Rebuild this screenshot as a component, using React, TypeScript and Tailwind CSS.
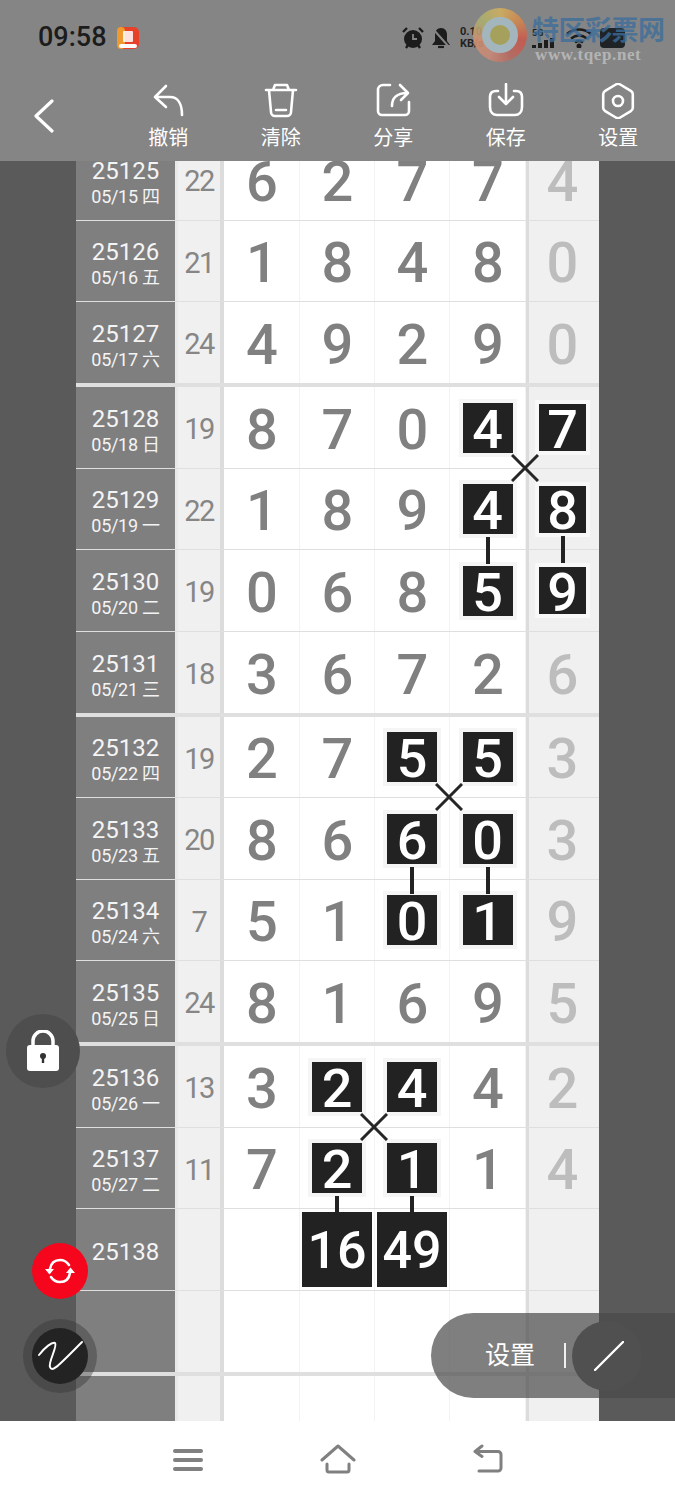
import React from "react";

type DrawRow = {
  id?: string;
  date?: string;
  sum?: number;
  cells: (number | string | null)[];
  marked?: number[];
  linked?: number[];
  crossAt?: number;
  shortLink?: boolean;
  thick?: boolean;
};

const rows: DrawRow[] = [
  { id: "25125", date: "05/15 四", sum: 22, cells: [6, 2, 7, 7, 4] },
  { id: "25126", date: "05/16 五", sum: 21, cells: [1, 8, 4, 8, 0] },
  { id: "25127", date: "05/17 六", sum: 24, cells: [4, 9, 2, 9, 0], thick: true },
  { id: "25128", date: "05/18 日", sum: 19, cells: [8, 7, 0, 4, 7], marked: [3, 4], crossAt: 3 },
  { id: "25129", date: "05/19 一", sum: 22, cells: [1, 8, 9, 4, 8], marked: [3, 4], linked: [3, 4] },
  { id: "25130", date: "05/20 二", sum: 19, cells: [0, 6, 8, 5, 9], marked: [3, 4] },
  { id: "25131", date: "05/21 三", sum: 18, cells: [3, 6, 7, 2, 6], thick: true },
  { id: "25132", date: "05/22 四", sum: 19, cells: [2, 7, 5, 5, 3], marked: [2, 3], crossAt: 2 },
  { id: "25133", date: "05/23 五", sum: 20, cells: [8, 6, 6, 0, 3], marked: [2, 3], linked: [2, 3] },
  { id: "25134", date: "05/24 六", sum: 7, cells: [5, 1, 0, 1, 9], marked: [2, 3] },
  { id: "25135", date: "05/25 日", sum: 24, cells: [8, 1, 6, 9, 5], thick: true },
  { id: "25136", date: "05/26 一", sum: 13, cells: [3, 2, 4, 4, 2], marked: [1, 2], crossAt: 1 },
  { id: "25137", date: "05/27 二", sum: 11, cells: [7, 2, 1, 1, 4], marked: [1, 2], linked: [1, 2], shortLink: true },
  { id: "25138", cells: [null, "16", "49", null, null] },
  { cells: [null, null, null, null, null], thick: true },
  { cells: [null, null, null, null, null] },
];

const cellWidths = ["w-[76px]", "w-[75px]", "w-[75px]", "w-[76px]"];

const MarkedDigit = ({
  value,
  small,
  link,
  shortLink,
}: {
  value: number;
  small?: boolean;
  link?: boolean;
  shortLink?: boolean;
}) => (
  <div
    className={`relative mt-[1px] flex items-center justify-center bg-[#222222] border-[4px] box-content text-white font-medium text-[54px] leading-none ${
      small ? "w-[47px] h-[47px] border-[#f8f8f8]" : "w-[50px] h-[50px] border-[#f5f5f5]"
    }`}
  >
    <span className="pt-[4px]">{value}</span>
    {link && (
      <div
        className={`absolute left-1/2 -translate-x-1/2 top-full mt-[3px] w-[4px] bg-[#222222] z-10 ${
          shortLink ? "h-[17px]" : "h-[27px]"
        }`}
      />
    )}
  </div>
);

const Cross = () => (
  <svg
    className="absolute right-[-14px] bottom-[-14px] z-20"
    width="28"
    height="28"
    viewBox="0 0 28 28"
    fill="none"
    stroke="#262626"
    strokeWidth="3"
  >
    <path d="M1 1 27 27M27 1 1 27" />
  </svg>
);

const Row = ({ row }: { row: DrawRow }) => {
  const digit = (i: number, extra: string) => {
    const value = row.cells[i];
    const isMarked = row.marked?.includes(i);
    const isLinked = row.linked?.includes(i);
    if (typeof value === "string") {
      return (
        <div className="relative z-10 w-[70px] h-[75px] flex items-center justify-center pt-[3px] bg-[#222222] text-white text-[52px] font-medium leading-none">
          {value}
        </div>
      );
    }
    if (value === null) return null;
    if (isMarked) {
      return (
        <MarkedDigit
          value={value}
          small={i === 4}
          link={isLinked}
          shortLink={row.shortLink}
        />
      );
    }
    return <span className={extra}>{value}</span>;
  };

  return (
    <div
      className={`flex w-[523px] shrink-0 border-[#dfdfdf] ${
        row.thick ? "h-[85px] border-b-[4px]" : "h-[81.5px] border-b"
      }`}
    >
      <div className="w-[99px] flex flex-col items-center justify-center pt-[5px] bg-[#7f7f7f] text-[#f4f4f4]">
        {row.id && <div className="text-[24px] leading-[30px]">{row.id}</div>}
        {row.date && (
          <div className="text-[18px] leading-[22px] tracking-[-0.3px] whitespace-nowrap">{row.date}</div>
        )}
      </div>
      <div className="w-[3px] bg-[#e9e9e9]" />
      <div className="w-[42px] flex items-center justify-center pt-[5px] bg-[#f0f0f0] text-[#868686] text-[29px] tracking-[-1.5px]">
        {row.sum}
      </div>
      <div className="w-[4px] bg-[#dcdcdc]" />
      {cellWidths.map((width, i) => (
        <div
          key={i}
          className={`relative flex items-center justify-center bg-white border-r border-[#f3f3f3] ${width}`}
        >
          {digit(i, "pt-[5px] pl-[1px] text-[#808080] font-medium text-[56px] leading-none")}
          {row.crossAt === i && <Cross />}
        </div>
      ))}
      <div className="w-[3px] bg-[#dcdcdc]" />
      <div className="w-[70px] flex items-center justify-center pr-[3px] bg-[#f0f0f0]">
        {digit(4, "pt-[5px] text-[#bdbdbd] font-medium text-[56px] leading-none")}
      </div>
    </div>
  );
};

const ToolIcon = ({ children }: { children: React.ReactNode }) => (
  <svg
    width="36"
    height="36"
    viewBox="0 0 36 36"
    fill="none"
    stroke="#ffffff"
    strokeWidth="2.6"
    strokeLinecap="round"
    strokeLinejoin="round"
  >
    {children}
  </svg>
);

const tools = [
  {
    label: "撤销",
    icon: <path d="M16 3 5 14l11 10M5 14h15c8 0 12 7 12 18" />,
  },
  {
    label: "清除",
    icon: (
      <path d="M3 7h30M10 7l2-5h12l2 5M6 7l2 22a4 4 0 0 0 4 4h12a4 4 0 0 0 4-4l2-22M13 27h10" />
    ),
  },
  {
    label: "分享",
    icon: (
      <path d="M15 2H8a5 5 0 0 0-5 5v21a4 4 0 0 0 4 4h23a4 4 0 0 0 4-4v-9M17 23c0-8 5-13 15-13M25 2l8 8-7 7" />
    ),
  },
  {
    label: "保存",
    icon: (
      <path d="M10 8H8c-4 0-6 2-6 6v10c0 5 3 8 7 8h18c4 0 7-3 7-8V14c0-4-2-6-6-6h-2M18 1v20M11 14l7 7 7-7" />
    ),
  },
  {
    label: "设置",
    icon: (
      <>
        <path d="M15.8 1.5a4 4 0 0 1 4.4 0l10.6 6.4a4 4 0 0 1 2 3.4v13.4a4 4 0 0 1-2 3.4l-10.6 6.4a4 4 0 0 1-4.4 0L5.2 28.1a4 4 0 0 1-2-3.4V11.3a4 4 0 0 1 2-3.4z" />
        <circle cx="18" cy="18" r="5" />
      </>
    ),
  },
];

const StatusIcons = () => (
  <div className="flex items-center ml-auto text-[#1c1c1c]">
    {/* alarm */}
    <svg width="24" height="24" viewBox="0 0 24 24">
      <circle cx="12" cy="13" r="9" fill="#1c1c1c" />
      <path d="M12 8v5h4" stroke="#858585" strokeWidth="1.8" fill="none" />
      <path d="M2 6 6 2M22 6l-4-4M5 22l2-3M19 22l-2-3" stroke="#1c1c1c" strokeWidth="2.4" />
    </svg>
    {/* muted bell */}
    <svg width="22" height="24" viewBox="0 0 22 24" className="ml-[5px]">
      <path d="M11 2c4 0 6 3 6 7v6l3 4H2l3-4V9c0-4 2-7 6-7z" fill="#1c1c1c" />
      <path d="M8 21h6" stroke="#1c1c1c" strokeWidth="2.2" />
      <path d="M3 3l17 19" stroke="#858585" strokeWidth="2" />
    </svg>
    <div className="ml-[8px] w-[30px] text-[11px] leading-[12px] font-bold text-[#222222]">
      <div>0.10</div>
      <div>KB/s</div>
    </div>
    {/* 5G signal */}
    <div className="ml-[42px] flex flex-col w-[26px]">
      <span className="text-[9px] leading-[10px] font-bold">5G</span>
      <div className="flex items-end gap-[2px] h-[10px]">
        <div className="w-[4px] h-[3px] bg-[#1c1c1c]" />
        <div className="w-[4px] h-[5px] bg-[#1c1c1c]" />
        <div className="w-[4px] h-[8px] bg-[#1c1c1c]" />
        <div className="w-[4px] h-[10px] bg-[#1c1c1c]" />
      </div>
    </div>
    {/* wifi */}
    <svg width="26" height="20" viewBox="0 0 26 20" className="ml-[8px]" fill="none" stroke="#1c1c1c" strokeWidth="2.6">
      <path d="M1 6c7-6 17-6 24 0M5 10.500c5-4 11-4 16 0M9 14.500c2.500-2 5.500-2 8 0" />
      <circle cx="13" cy="18" r="1.200" fill="#1c1c1c" />
    </svg>
    {/* battery */}
    <div className="ml-[8px] w-[25px] h-[20px] rounded-[4px] bg-[#1f2326]" />
  </div>
);

const Watermark = () => (
  <>
    <div className="absolute left-[473px] top-[8px] w-[54px] h-[54px] rounded-full flex items-center justify-center bg-[conic-gradient(#d0b060,#d08a50,#c9584e,#b86a60,#c78a78,#cf8f70,#a9b070,#d0b060)] opacity-90">
      <div className="w-[36px] h-[36px] rounded-full flex items-center justify-center bg-[#a8bcc4]">
        <div className="w-[20px] h-[20px] rounded-full bg-[#a9a458]" />
      </div>
    </div>
    <div className="absolute left-[532px] top-[15px] text-[27px] leading-[32px] tracking-[-0.500px] whitespace-nowrap text-[#3d6d9c]/80 font-bold">
      特区彩票网
    </div>
    <div className="absolute left-[535px] top-[44px] text-[17px] leading-[22px] whitespace-nowrap font-bold font-['Liberation_Serif',serif] tracking-[0.600px] text-[#b4b4b4]">
      www.tqep.net
    </div>
  </>
);

const App = () => {
  return (
    <div className="relative flex flex-col w-[675px] h-[1500px] overflow-hidden bg-[#5a5a5a] font-['Roboto','Noto_Sans_CJK_SC',sans-serif]">
      <header className="relative z-30 h-[161px] shrink-0 bg-[#858585]">
        <div className="flex items-center h-[75px] pl-[38px] pr-[50px]">
          <span className="text-[27px] leading-none text-[#1c1c1c] font-medium">09:58</span>
          {/* app badge */}
          <svg width="24" height="24" viewBox="0 0 24 24" className="ml-[9px]">
            <rect x="1" y="1" width="22" height="22" rx="5" fill="#e8412a" />
            <rect x="1" y="1" width="8" height="22" rx="4" fill="#ef9a2e" />
            <rect x="7" y="5" width="10" height="11" rx="1" fill="#ffffff" opacity="0.85" />
            <rect x="3" y="18" width="18" height="4" rx="2" fill="#ffffff" />
          </svg>
          <StatusIcons />
        </div>
        <Watermark />
        <div className="flex h-[86px]">
          <div className="w-[112px] pl-[33px] pt-[24px]">
            <svg width="22" height="34" viewBox="0 0 22 34" fill="none" stroke="#ffffff" strokeWidth="3.200" strokeLinecap="round" strokeLinejoin="round">
              <path d="M19 2 3 17l16 15" />
            </svg>
          </div>
          {tools.map((tool) => (
            <div key={tool.label} className="w-[112.500px] flex flex-col items-center pt-[8px] text-white">
              <ToolIcon>{tool.icon}</ToolIcon>
              <span className="mt-[5px] text-[20px] leading-[28px]">{tool.label}</span>
            </div>
          ))}
        </div>
      </header>

      <main className="flex-1 overflow-hidden pl-[76px]">
        <div className="flex flex-col mt-[-22px]">
          {rows.map((row, i) => (
            <Row key={i} row={row} />
          ))}
        </div>
      </main>

      <nav className="relative z-30 h-[79px] shrink-0 bg-white flex items-start pl-[173px] pt-[23px]">
        <div className="mt-[5px] w-[30px] flex flex-col gap-[5px]">
          <div className="h-[4px] rounded-full bg-[#808080]" />
          <div className="h-[4px] rounded-full bg-[#808080]" />
          <div className="h-[4px] rounded-full bg-[#808080]" />
        </div>
        <svg width="36" height="30" viewBox="0 0 36 30" className="ml-[117px]" fill="none" stroke="#808080" strokeWidth="3" strokeLinecap="round" strokeLinejoin="round">
          <path d="M2 16 18 2l16 14M7 20v6a2 2 0 0 0 2 2h18a2 2 0 0 0 2-2v-6" />
        </svg>
        <svg width="32" height="30" viewBox="0 0 32 30" className="ml-[116px]" fill="none" stroke="#808080" strokeWidth="3" strokeLinecap="round" strokeLinejoin="round">
          <path d="M10 2 3 7.500l7 5M3 7.500h23a3 3 0 0 1 3 3V24a3 3 0 0 1-3 3H7" />
        </svg>
      </nav>

      {/* lock toggle */}
      <div className="absolute z-20 left-[6px] top-[1014px] w-[74px] h-[74px] rounded-full bg-[#4e4e4e] flex items-center justify-center">
        <svg width="36" height="42" viewBox="0 0 36 42">
          <path d="M8 16v-5a10 10 0 0 1 20 0v5" fill="none" stroke="#ffffff" strokeWidth="3.500" />
          <rect x="2" y="15" width="32" height="26" rx="3" fill="#ffffff" />
          <circle cx="18" cy="26" r="3" fill="#333333" />
          <rect x="16.800" y="27" width="2.400" height="6" fill="#333333" />
        </svg>
      </div>

      {/* refresh */}
      <div className="absolute z-20 left-[32px] top-[1243px] w-[56px] h-[56px] rounded-full bg-[#f5061d] flex items-center justify-center">
        <svg width="32" height="30" viewBox="0 0 32 30" fill="none" stroke="#ffffff" strokeWidth="2.600" strokeLinecap="round">
          <path d="M6 13C7 7 11 4 16 4c4 0 7 2 9 5" />
          <path d="M26 17c-1 6-5 9-10 9-4 0-7-2-9-5" />
          <path d="M1 13h9l-4.500 5.500z" fill="#ffffff" stroke="none" />
          <path d="M31 17h-9l4.500-5.500z" fill="#ffffff" stroke="none" />
        </svg>
      </div>

      {/* handwriting pen */}
      <div className="absolute z-20 left-[23px] top-[1319px] w-[74px] h-[74px] rounded-full bg-[#333333]/40 flex items-center justify-center">
        <div className="w-[56px] h-[56px] rounded-full bg-[#232323]">
          <svg width="56" height="56" viewBox="0 0 56 56" fill="none" stroke="#ffffff" strokeWidth="2" strokeLinecap="round">
            <path d="M7 27C13 19 20 14 23 15 26 18 16 34 18 39 20 45 26 38 50 14" />
          </svg>
        </div>
      </div>

      {/* line settings pill */}
      <div className="absolute z-20 left-[431px] top-[1313px] w-[244px] h-[85px] rounded-l-full bg-[#494949]/70 flex items-center pl-[54px] text-white">
        <span className="text-[25px] leading-none w-[50px]">设置</span>
        <div className="ml-[29px] w-[2px] h-[25px] bg-[#f0f0f0]" />
        <div className="ml-[6px] w-[70px] h-[70px] rounded-full bg-[#505050] flex items-center justify-center pl-[4px]">
          <svg width="30" height="30" viewBox="0 0 30 30" fill="none" stroke="#ffffff" strokeWidth="2.400" strokeLinecap="round">
            <path d="M1 29 29 1" />
          </svg>
        </div>
      </div>
    </div>
  );
};

export default App;
